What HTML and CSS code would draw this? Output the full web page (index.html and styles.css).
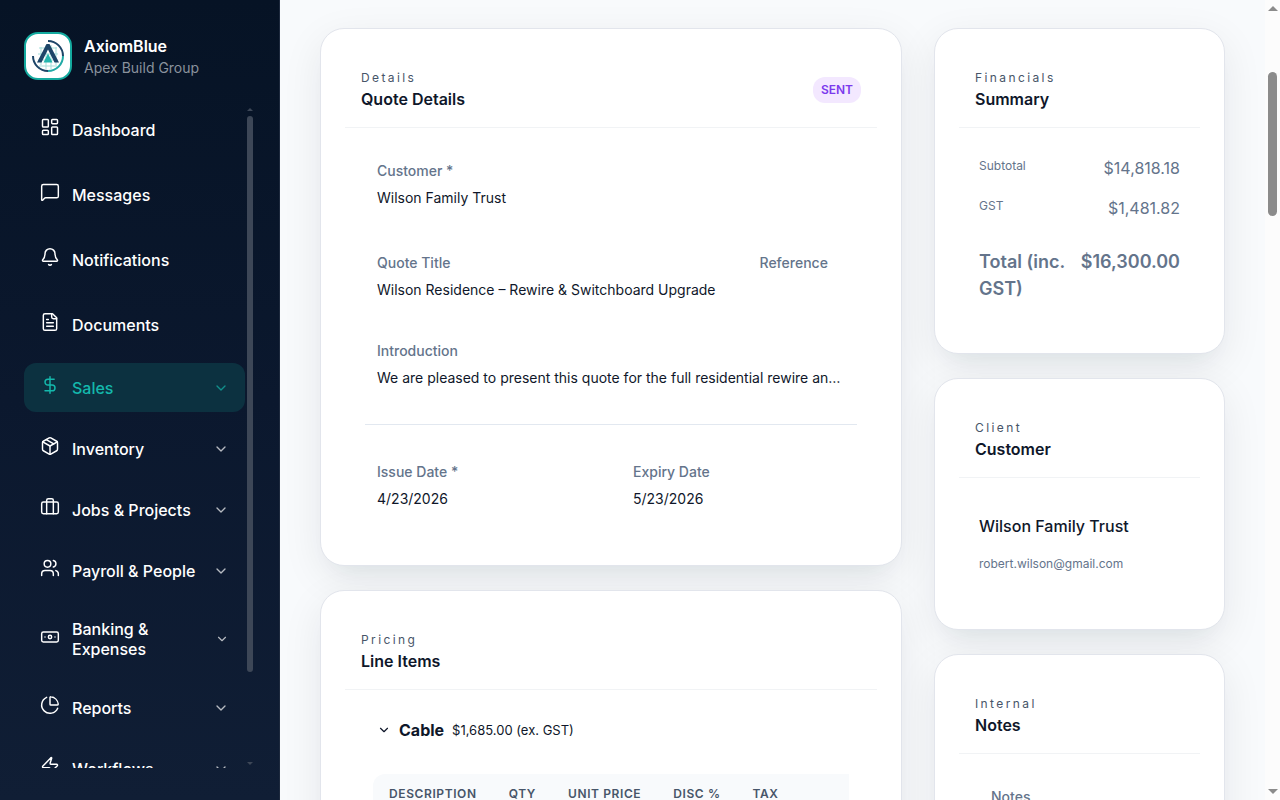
FILE: index.html
```html
<!DOCTYPE html>
<html lang="en">
<head>
  <meta charset="UTF-8" />
  <meta name="viewport" content="width=device-width, initial-scale=1" />
  <title>AxiomBlue - Quote Details</title>
  <link rel="stylesheet" href="styles.css">
</head>
<body>
  <div class="app">
    <aside class="sidebar">
      <div class="brand">
        <div class="brand-logo">
          <svg viewBox="0 0 44 44" fill="none" aria-hidden="true">
            <g stroke="#a5dedb" stroke-width="1">
              <path d="M13 14h18M12 20h20M12 26h20M13 32h18" />
              <path d="M15 13v18M20 11v24M25 11v24M30 13v18" />
            </g>
            <path d="M22 7a15 15 0 0 1 15 15" stroke="#1d4568" stroke-width="2" />
            <path d="M37 22a15 15 0 0 1-15 15" stroke="#22aaa6" stroke-width="2" />
            <path d="M22 37A15 15 0 0 1 7 22" stroke="#1d4568" stroke-width="2" />
            <path d="M20.5 10h3L33 28.500h-4.500L22 15.500 15.500 28.500H11z" fill="#1d4568" />
            <path d="M22 19.500l4.500 9h-9z" fill="#22b5ae" />
          </svg>
        </div>
        <div>
          <div class="brand-name">AxiomBlue</div>
          <div class="brand-org">Apex Build Group</div>
        </div>
      </div>

      <div class="nav-wrap">
        <nav class="nav">
          <a href="#" class="nav-item">
            <svg class="icon" viewBox="0 0 24 24"><rect x="3" y="3" width="7" height="9" rx="1" /><rect x="14" y="3" width="7" height="5" rx="1" /><rect x="14" y="12" width="7" height="9" rx="1" /><rect x="3" y="16" width="7" height="5" rx="1" /></svg>
            <span>Dashboard</span>
          </a>
          <a href="#" class="nav-item">
            <svg class="icon" viewBox="0 0 24 24"><path d="M22 17a2 2 0 0 1-2 2H6.800a2 2 0 0 0-1.400.600l-2.200 2.200A.700.700 0 0 1 2 21.300V5a2 2 0 0 1 2-2h16a2 2 0 0 1 2 2z" /></svg>
            <span>Messages</span>
          </a>
          <a href="#" class="nav-item">
            <svg class="icon" viewBox="0 0 24 24"><path d="M10.300 21a2 2 0 0 0 3.400 0" /><path d="M3.300 15.300A1 1 0 0 0 4 17h16a1 1 0 0 0 .740-1.700C19.400 14 18 12.500 18 8A6 6 0 0 0 6 8c0 4.500-1.400 6-2.700 7.300" /></svg>
            <span>Notifications</span>
          </a>
          <a href="#" class="nav-item">
            <svg class="icon" viewBox="0 0 24 24"><path d="M15 2H6a2 2 0 0 0-2 2v16a2 2 0 0 0 2 2h12a2 2 0 0 0 2-2V7z" /><path d="M14 2v4a2 2 0 0 0 2 2h4M10 9H8M16 13H8M16 17H8" /></svg>
            <span>Documents</span>
          </a>
          <a href="#" class="nav-item nav-group active">
            <svg class="icon" viewBox="0 0 24 24"><path d="M12 2v20" /><path d="M17 5H9.500a3.500 3.500 0 0 0 0 7h5a3.500 3.500 0 0 1 0 7H6" /></svg>
            <span>Sales</span>
            <svg class="chevron" viewBox="0 0 24 24"><path d="m6 9 6 6 6-6" /></svg>
          </a>
          <a href="#" class="nav-item nav-group">
            <svg class="icon" viewBox="0 0 24 24"><path d="M11 21.700a2 2 0 0 0 2 0l7-4A2 2 0 0 0 21 16V8a2 2 0 0 0-1-1.700l-7-4a2 2 0 0 0-2 0l-7 4A2 2 0 0 0 3 8v8a2 2 0 0 0 1 1.700z" /><path d="M12 22V12" /><path d="M3.300 7 12 12l8.700-5" /><path d="m7.500 4.300 9 5.100" /></svg>
            <span>Inventory</span>
            <svg class="chevron" viewBox="0 0 24 24"><path d="m6 9 6 6 6-6" /></svg>
          </a>
          <a href="#" class="nav-item nav-group">
            <svg class="icon" viewBox="0 0 24 24"><path d="M16 20V4a2 2 0 0 0-2-2h-4a2 2 0 0 0-2 2v16" /><rect x="2" y="6" width="20" height="14" rx="2" /></svg>
            <span>Jobs &amp; Projects</span>
            <svg class="chevron" viewBox="0 0 24 24"><path d="m6 9 6 6 6-6" /></svg>
          </a>
          <a href="#" class="nav-item nav-group">
            <svg class="icon" viewBox="0 0 24 24"><path d="M16 21v-2a4 4 0 0 0-4-4H6a4 4 0 0 0-4 4v2" /><circle cx="9" cy="7" r="4" /><path d="M22 21v-2a4 4 0 0 0-3-3.900" /><path d="M16 3.100a4 4 0 0 1 0 7.800" /></svg>
            <span>Payroll &amp; People</span>
            <svg class="chevron" viewBox="0 0 24 24"><path d="m6 9 6 6 6-6" /></svg>
          </a>
          <a href="#" class="nav-item nav-group">
            <svg class="icon" viewBox="0 0 24 24"><rect x="2" y="6" width="20" height="12" rx="2" /><circle cx="12" cy="12" r="2" /><path d="M6 12h.010M18 12h.010" /></svg>
            <span>Banking &amp; Expenses</span>
            <svg class="chevron chevron-small" viewBox="0 0 24 24"><path d="m6 9 6 6 6-6" /></svg>
          </a>
          <a href="#" class="nav-item nav-group">
            <svg class="icon" viewBox="0 0 24 24"><path d="M21 12c.600 0 1-.400.900-1A10 10 0 0 0 13 2.100c-.600-.100-1 .400-1 .900v8a1 1 0 0 0 1 1z" /><path d="M21.200 15.900A10 10 0 1 1 8 2.800" /></svg>
            <span>Reports</span>
            <svg class="chevron" viewBox="0 0 24 24"><path d="m6 9 6 6 6-6" /></svg>
          </a>
          <a href="#" class="nav-item nav-group">
            <svg class="icon" viewBox="0 0 24 24"><path d="M4 14a1 1 0 0 1-.800-1.600l9.900-10.200a.500.500 0 0 1 .900.460l-1.900 6A1 1 0 0 0 13 10h7a1 1 0 0 1 .800 1.600l-9.900 10.200a.500.500 0 0 1-.900-.460l1.900-6A1 1 0 0 0 11 14z" /></svg>
            <span>Workflows</span>
            <svg class="chevron" viewBox="0 0 24 24"><path d="m6 9 6 6 6-6" /></svg>
          </a>
        </nav>
        <div class="rail" aria-hidden="true">
          <span class="rail-up"></span>
          <span class="rail-thumb"></span>
          <span class="rail-down"></span>
        </div>
      </div>
    </aside>

    <main class="content">
      <div class="column">
        <section class="card">
          <header class="card-head">
            <div>
              <p class="eyebrow">Details</p>
              <h2>Quote Details</h2>
            </div>
            <span class="badge">SENT</span>
          </header>
          <div class="card-body">
            <div class="field customer-field">
              <span class="field-label">Customer *</span>
              <span class="field-value">Wilson Family Trust</span>
            </div>
            <div class="field-row title-row">
              <div class="field">
                <span class="field-label">Quote Title</span>
                <span class="field-value">Wilson Residence – Rewire &amp; Switchboard Upgrade</span>
              </div>
              <div class="field">
                <span class="field-label">Reference</span>
              </div>
            </div>
            <div class="field">
              <span class="field-label">Introduction</span>
              <span class="field-value">We are pleased to present this quote for the full residential rewire and switchboard upgrade.</span>
            </div>
            <hr>
            <div class="field-row">
              <div class="field">
                <span class="field-label">Issue Date *</span>
                <span class="field-value">4/23/2026</span>
              </div>
              <div class="field">
                <span class="field-label">Expiry Date</span>
                <span class="field-value">5/23/2026</span>
              </div>
            </div>
          </div>
        </section>

        <section class="card">
          <header class="card-head">
            <div>
              <p class="eyebrow">Pricing</p>
              <h2>Line Items</h2>
            </div>
          </header>
          <div class="card-body">
            <div class="group">
              <button type="button" class="group-toggle">
                <svg viewBox="0 0 24 24" aria-hidden="true"><path d="m6 9 6 6 6-6" /></svg>
                <strong>Cable</strong>
                <span>$1,685.00 (ex. GST)</span>
              </button>
              <div class="table-wrap">
                <table>
                  <thead>
                    <tr>
                      <th>Description</th>
                      <th>Qty</th>
                      <th>Unit Price</th>
                      <th>Disc %</th>
                      <th class="last">Tax</th>
                    </tr>
                  </thead>
                </table>
              </div>
            </div>
          </div>
        </section>
      </div>

      <div class="column">
        <section class="card">
          <header class="card-head">
            <div>
              <p class="eyebrow">Financials</p>
              <h2>Summary</h2>
            </div>
          </header>
          <div class="card-body">
            <div class="sum-row"><span class="sum-label">Subtotal</span><span>$14,818.18</span></div>
            <div class="sum-row"><span class="sum-label">GST</span><span>$1,481.82</span></div>
            <div class="sum-row total"><span>Total (inc. GST)</span><span>$16,300.00</span></div>
          </div>
        </section>

        <section class="card">
          <header class="card-head">
            <div>
              <p class="eyebrow">Client</p>
              <h2>Customer</h2>
            </div>
          </header>
          <div class="card-body">
            <div class="client">
              <p class="client-name">Wilson Family Trust</p>
              <p class="client-email">robert.wilson@gmail.com</p>
            </div>
          </div>
        </section>

        <section class="card">
          <header class="card-head">
            <div>
              <p class="eyebrow">Internal</p>
              <h2>Notes</h2>
            </div>
          </header>
          <div class="card-body">
            <div class="field">
              <span class="field-label">Notes</span>
            </div>
          </div>
        </section>
      </div>
    </main>

    <div class="page-scroll" aria-hidden="true">
      <span class="scroll-up"></span>
      <span class="scroll-thumb"></span>
      <span class="scroll-down"></span>
    </div>
  </div>
</body>
</html>
```
FILE: styles.css
```css
:root {
  --text: #0f172a;
  --muted: #64748b;
  --teal: #14b8ac;
  --line: #e2e8f0;
}

* {
  box-sizing: border-box;
}

body {
  margin: 0;
  background: #f8fafc;
  color: var(--text);
  font-family: Inter, "Liberation Sans", sans-serif;
  font-size: 16px;
  line-height: 24px;
}

h2,
p {
  margin: 0;
}

.app {
  display: flex;
  height: 100vh;
  overflow: hidden;
}

/* Sidebar */
.sidebar {
  display: flex;
  flex-direction: column;
  flex: none;
  gap: 24px;
  width: 280px;
  padding: 32px 24px;
  border-right: 1px solid #1d293d;
  background: linear-gradient(180deg, #061325 0%, #0b182e 50%, #101e35 100%);
  color: #fff;
}

.brand {
  display: flex;
  align-items: center;
  gap: 12px;
}

.brand-logo {
  width: 48px;
  height: 48px;
  border: 2px solid #14aa9f;
  border-radius: 14px;
  background: #fff;
}

.brand-logo svg {
  display: block;
}

.brand-name {
  font-weight: 600;
  line-height: 22px;
}

.brand-org {
  color: #8a929d;
  font-size: 14px;
  line-height: 21px;
}

.nav-wrap {
  display: flex;
  flex: 1;
  gap: 2px;
  min-height: 0;
}

.nav {
  flex: 1;
  overflow: hidden;
  padding-top: 1px;
}

.nav-item {
  display: flex;
  align-items: center;
  gap: 12px;
  min-height: 49px;
  margin-bottom: 16px;
  padding: 12px 16px;
  border-radius: 12px;
  color: #fff;
  font-weight: 500;
  line-height: 20px;
  text-decoration: none;
}

.nav-item + .nav-group {
  margin-top: -2px;
}

.nav-group {
  margin-bottom: 14px;
}

.nav-item.active {
  background: #0c3140;
  color: var(--teal);
}

.icon,
.chevron,
.group-toggle svg {
  flex: none;
  fill: none;
  stroke: currentColor;
  stroke-width: 2;
  stroke-linecap: round;
  stroke-linejoin: round;
}

.icon {
  width: 20px;
  height: 20px;
  margin-bottom: 5px;
  stroke-width: 1.75;
}

.chevron {
  width: 16px;
  height: 16px;
  margin-left: auto;
  opacity: 0.7;
}

.chevron-small {
  width: 14px;
  height: 14px;
}

.rail {
  display: flex;
  flex-direction: column;
  align-items: center;
  width: 6px;
  margin: 4px 2px 3px 0;
}

.rail-up,
.rail-down,
.scroll-up,
.scroll-down {
  border: 3px solid transparent;
  border-top-width: 0;
  border-bottom-color: #3d4757;
}

.rail-down,
.scroll-down {
  margin-top: auto;
  border-width: 3px 3px 0;
  border-top-color: #3d4757;
}

.rail-thumb {
  flex: 1;
  width: 6px;
  margin: 5px 0 90px;
  border-radius: 3px;
  background: #3d4757;
}

/* Content */
.content {
  display: grid;
  grid-template-columns: minmax(0, 2fr) minmax(0, 1fr);
  align-items: start;
  gap: 32px;
  flex: 1;
  min-width: 0;
  overflow: hidden;
  padding: 28px 40px;
}

.column {
  display: grid;
  grid-template-columns: minmax(0, 1fr);
  gap: 24px;
}

.card {
  position: relative;
  padding: 24px;
  border: 1px solid #e2e5ec;
  border-radius: 24px;
  background: #fff;
  box-shadow: 0 12px 40px rgba(15, 23, 42, 0.08), 0 16px 24px -16px rgba(15, 60, 60, 0.08);
}

.card-head {
  display: flex;
  align-items: center;
  justify-content: space-between;
  padding: 16px;
  border-bottom: 1px solid #f1f3f5;
}

.eyebrow {
  color: #475569;
  font-size: 12px;
  letter-spacing: 2.4px;
  line-height: 18px;
}

.card-head h2 {
  font-size: 16px;
  font-weight: 600;
  line-height: 24px;
}

.badge {
  padding: 0 8px;
  border-radius: 12px;
  background: #f3e8ff;
  color: #7c3aed;
  font-size: 12px;
  font-weight: 600;
  line-height: 26px;
}

.card-body {
  padding: 20px 20px 19px;
}

/* Fields */
.field {
  display: grid;
  grid-template-columns: minmax(0, 1fr);
  gap: 5px;
  padding: 12px;
  font-size: 14px;
  line-height: 22px;
}

.field-label {
  color: var(--muted);
  font-weight: 500;
}

.field-value {
  overflow: hidden;
  text-overflow: ellipsis;
  white-space: nowrap;
}

.field-row {
  display: grid;
  grid-template-columns: 1fr 1fr;
  gap: 20px;
}

.customer-field {
  margin-bottom: 19px;
}

.title-row {
  grid-template-columns: 2fr 1fr;
  margin-bottom: 15px;
}

.title-row .field {
  grid-template-columns: auto;
}

.title-row .field-value {
  overflow: visible;
}

hr {
  height: 1px;
  margin: 23px 0 24px;
  border: 0;
  background: var(--line);
}

/* Line items */
.group {
  padding: 8px;
}

.group-toggle {
  display: flex;
  align-items: center;
  gap: 8px;
  margin-bottom: 32px;
  padding: 0 4px;
  border: 0;
  background: none;
  color: inherit;
  font: inherit;
  cursor: pointer;
}

.group-toggle svg {
  width: 14px;
  height: 14px;
}

.group-toggle strong {
  font-weight: 700;
}

.group-toggle span {
  font-size: 13px;
}

.table-wrap {
  overflow: hidden;
  border-radius: 12px 0 0 0;
}

table {
  width: 100%;
  border-collapse: collapse;
}

th {
  padding: 10px 16px;
  background: #f8fafc;
  color: #475569;
  font-size: 12px;
  font-weight: 600;
  letter-spacing: 0.6px;
  line-height: 20px;
  text-align: left;
  text-transform: uppercase;
  white-space: nowrap;
}

th.last {
  width: 100%;
}

/* Summary */
.sum-row {
  display: flex;
  justify-content: space-between;
  gap: 8px;
  padding: 8px 0;
  color: var(--muted);
}

.sum-label {
  font-size: 12px;
  line-height: 20px;
}

.sum-row.total {
  margin-top: 12px;
  font-size: 18px;
  font-weight: 600;
  line-height: 27px;
}

.client {
  padding: 16px 0 12px;
}

.client-name {
  margin-bottom: 16px;
  font-weight: 500;
}

.client-email {
  color: var(--muted);
  font-size: 12px;
  line-height: 20px;
}

/* Page scrollbar */
.page-scroll {
  display: flex;
  flex-direction: column;
  align-items: center;
  flex: none;
  width: 15px;
  padding: 6px 0;
  background: #fcfcfc;
}

.scroll-up,
.scroll-down {
  border-left-width: 5px;
  border-right-width: 5px;
}

.scroll-up {
  border-bottom: 5px solid #8b8b8b;
}

.scroll-down {
  border-top: 5px solid #8b8b8b;
}

.scroll-thumb {
  width: 9px;
  height: 18vh;
  margin-top: 61px;
  border-radius: 5px;
  background: #8b8b8b;
}
```
